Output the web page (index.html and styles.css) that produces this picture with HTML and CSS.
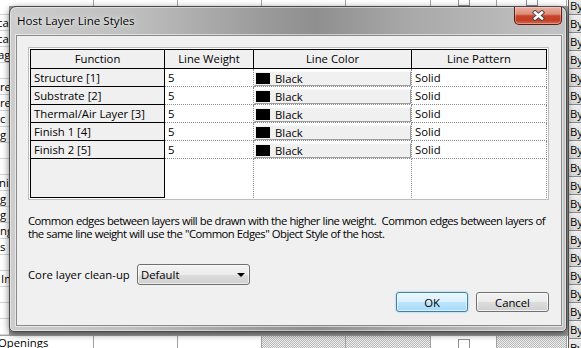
FILE: index.html
```html
<!DOCTYPE html>
<html lang="en">
<head>
    <meta charset="UTF-8">
    <meta name="viewport" content="width=device-width, initial-scale=1.0">
    <title>Host Layer Line Styles</title>
    <link rel="stylesheet" href="styles.css">
</head>
<body>
    <!-- the type properties sheet behind the dialog -->
    <div class="app">
        <div class="sheet">
            <div class="band band-top">
                <div class="cell c1"></div>
                <div class="cell c2"></div>
                <div class="cell c3"></div>
                <div class="cell c4"></div>
                <div class="cell c5"></div>
                <div class="cell c6 has-box"><span class="checkbox"></span></div>
                <div class="cell c7 has-box"><span class="checkbox"></span></div>
            </div>
            <div class="sheet-mid">
                <div class="left-col">
                    <div class="lrow lrow-first"></div>
                    <div class="lrow"><span class="cut3">cal</span></div>
                    <div class="lrow"><span class="cut3">cal</span></div>
                    <div class="lrow"><span class="cut2">ag</span></div>
                    <div class="lrow"></div>
                    <div class="lrow"><span>re</span></div>
                    <div class="lrow"><span>re</span></div>
                    <div class="lrow"><span>c l</span></div>
                    <div class="lrow"><span>g l</span></div>
                    <div class="lrow"></div>
                    <div class="lrow"></div>
                    <div class="lrow"><span class="cut1">ni</span></div>
                    <div class="lrow"><span>g</span></div>
                    <div class="lrow"><span>g</span></div>
                    <div class="lrow"><span>ng</span></div>
                    <div class="lrow"><span>s</span></div>
                    <div class="lrow"></div>
                    <div class="lrow"><span class="pad1">Im</span></div>
                    <div class="lrow"></div>
                    <div class="lrow"></div>
                    <div class="lrow"></div>
                </div>
            </div>
            <div class="band band-bottom">
                <div class="cell c1"><span class="cut2">Openings</span></div>
                <div class="cell c2"></div>
                <div class="cell c3"></div>
                <div class="cell c4 hatch"></div>
                <div class="cell c5 hatch"></div>
                <div class="cell c6 has-box-low"><span class="checkbox"></span></div>
                <div class="cell c7 hatch"></div>
            </div>
        </div>
        <div class="by-col">
            <div class="by">By</div>
            <div class="by">By</div>
            <div class="by">By</div>
            <div class="by">By</div>
            <div class="by">By</div>
            <div class="by">By</div>
            <div class="by">By</div>
            <div class="by">By</div>
            <div class="by">By</div>
            <div class="by">By</div>
            <div class="by">By</div>
            <div class="by">By</div>
            <div class="by">By</div>
            <div class="by">By</div>
            <div class="by">By</div>
            <div class="by">By</div>
            <div class="by">By</div>
            <div class="by">By</div>
            <div class="by">By</div>
            <div class="by">By</div>
        </div>
    </div>

    <div class="dialog">
        <div class="titlebar">
            <span class="title">Host Layer Line Styles</span>
            <div class="close">
                <svg width="13" height="11" viewBox="0 0 13 11">
                    <path d="M3 2.5 L10 8.5 M10 2.5 L3 8.5" stroke="#4a4a4a" stroke-width="4.4" stroke-linecap="square" fill="none"/>
                    <path d="M3 2.5 L10 8.5 M10 2.5 L3 8.5" stroke="#fff" stroke-width="2.4" stroke-linecap="square" fill="none"/>
                </svg>
            </div>
        </div>
        <div class="client">
            <div class="grid-wrap">
                <div class="grid">
                    <div class="hd">Function</div>
                    <div class="hd">Line Weight</div>
                    <div class="hd">Line Color</div>
                    <div class="hd">Line Pattern</div>

                    <div class="fn">Structure [1]</div>
                    <div class="val">5</div>
                    <div class="val color"><div class="color-btn"><span class="swatch"></span>Black</div></div>
                    <div class="val">Solid</div>

                    <div class="fn">Substrate [2]</div>
                    <div class="val">5</div>
                    <div class="val color"><div class="color-btn"><span class="swatch"></span>Black</div></div>
                    <div class="val">Solid</div>

                    <div class="fn">Thermal/Air Layer [3]</div>
                    <div class="val">5</div>
                    <div class="val color"><div class="color-btn"><span class="swatch"></span>Black</div></div>
                    <div class="val">Solid</div>

                    <div class="fn">Finish 1 [4]</div>
                    <div class="val">5</div>
                    <div class="val color"><div class="color-btn"><span class="swatch"></span>Black</div></div>
                    <div class="val">Solid</div>

                    <div class="fn">Finish 2 [5]</div>
                    <div class="val">5</div>
                    <div class="val color"><div class="color-btn"><span class="swatch"></span>Black</div></div>
                    <div class="val">Solid</div>

                    <div class="fn empty"></div>
                    <div class="val empty"></div>
                    <div class="val empty"></div>
                    <div class="val empty"></div>
                </div>
            </div>

            <div class="note">
                <div class="note-line">Common edges between layers will be drawn with the higher line weight.&nbsp; Common edges between layers of</div>
                <div class="note-line">the same line weight will use the "Common Edges" Object Style of the host.</div>
            </div>

            <div class="core">
                <label class="core-label">Core layer clean-up</label>
                <div class="combo">
                    <span>Default</span>
                    <span class="arrow"></span>
                </div>
            </div>

            <div class="actions">
                <button class="btn btn-default">OK</button>
                <button class="btn">Cancel</button>
            </div>
        </div>
    </div>
</body>
</html>
```

FILE: styles.css
```css
body {
    margin: 0;
    width: 581px;
    height: 348px;
    overflow: hidden;
    position: relative;
    font-family: "Open Sans", "Liberation Sans", sans-serif;
    font-size: 11.3px;
    color: #000;
    background: #fff;
}

/* sheet behind the dialog */
.app {
    display: flex;
    height: 348px;
}
.sheet {
    width: 569px;
    display: flex;
    flex-direction: column;
    background: #9c9c9c;
}
.band {
    display: flex;
    background: #fff;
}
.band .cell {
    box-sizing: border-box;
    border-right: 1px solid #a3a3a3;
    white-space: nowrap;
    overflow: hidden;
}
.c1 { width: 94px; }
.c2 { width: 84px; }
.c3 { width: 84px; }
.c4 { width: 84px; }
.c5 { width: 85px; }
.c6 { width: 66px; }
.c7 { width: 70px; }
.band-top {
    height: 6px;
}
.has-box {
    display: flex;
    justify-content: center;
    align-items: flex-end;
}
.has-box-low {
    display: flex;
    justify-content: center;
    padding-top: 3px;
}
.checkbox {
    flex: none;
    width: 10px;
    height: 10px;
    border: 1px solid #8f8f8f;
    background: #fff;
}
.band-bottom {
    height: 13px;
    box-sizing: border-box;
    border-top: 1px solid #a3a3a3;
    line-height: 14px;
}
.hatch {
    background: repeating-conic-gradient(#b9b9b9 0 25%, #efefef 0 50%) 0 0 / 2px 2px;
}
.sheet-mid {
    flex: 1;
    display: flex;
}
.left-col {
    width: 9px;
    overflow: hidden;
    background: #fff;
}
.lrow {
    height: 16px;
    box-sizing: border-box;
    border-bottom: 1px solid #d4d4d4;
    line-height: 15px;
    white-space: nowrap;
}
.lrow-first {
    height: 9px;
}
.cut1 { margin-left: -1px; }
.cut2 { margin-left: -2px; }
.cut3 { margin-left: -3px; }
.pad1 { margin-left: 1px; }
.lrow span, .band span {
    display: inline-block;
}
.by-col {
    width: 12px;
    border-left: 1px solid #5e5e5e;
    background: #d0d0d0;
    overflow: hidden;
}
.by {
    height: 18px;
    box-sizing: border-box;
    border-bottom: 1px solid #8a8a8a;
    background: linear-gradient(#efefef, #d6d6d6);
    line-height: 17px;
    padding-left: 1px;
    white-space: nowrap;
}
.by:first-child {
    margin-top: -3px;
}

/* dialog */
.dialog {
    position: absolute;
    left: 9px;
    top: 6px;
    width: 558px;
    height: 326px;
    box-sizing: border-box;
    border: 1px solid #4a4a4a;
    border-radius: 7px 7px 5px 5px;
    padding: 0 4px 5px 6px;
    display: flex;
    flex-direction: column;
    background: linear-gradient(90deg, #cdcdcd 0%, #bfbfbf 22%, #979797 48%, #8f8f8f 55%, #a9a9a9 72%, #c3c3c3 100%);
    box-shadow: inset 0 0 0 1px rgba(255, 255, 255, 0.45), 0 2px 7px rgba(0, 0, 0, 0.55);
}
.titlebar {
    height: 28px;
    display: flex;
    justify-content: space-between;
    align-items: flex-start;
}
.title {
    margin: 6px 0 0 1px;
    line-height: 16px;
    font-size: 11.6px;
    text-shadow: 0 0 6px rgba(255, 255, 255, 0.9), 0 0 2px rgba(255, 255, 255, 0.7);
}
.close {
    width: 48px;
    height: 18px;
    box-sizing: border-box;
    border: 1px solid #5e1b10;
    border-top: none;
    border-radius: 0 0 5px 5px;
    background: linear-gradient(#eab0a2 0%, #dd8c79 42%, #c8462d 52%, #c23d24 78%, #d6705a 100%);
    box-shadow: inset 0 0 0 1px rgba(255, 255, 255, 0.3);
    display: flex;
    align-items: center;
    justify-content: center;
}
.close svg {
    display: block;
}
.client {
    flex: 1;
    background: #f0f0f0;
    border: 1px solid #8a8a8a;
    box-shadow: 0 0 0 1px rgba(255, 255, 255, 0.55);
    padding: 11px 12px 0 11px;
    display: flex;
    flex-direction: column;
}

/* line styles table */
.grid-wrap {
    border: 1px solid #bdbdbd;
    padding: 1px;
    background: #fff;
}
.grid {
    display: grid;
    grid-template-columns: 134px 89px 158px 135px;
    border-top: 1px solid #000;
    border-left: 1px solid #000;
}
.hd {
    height: 19px;
    box-sizing: border-box;
    border-right: 1px solid #000;
    border-bottom: 1px solid #000;
    background: #f0f0f0;
    text-align: center;
    line-height: 18px;
}
.fn {
    height: 18px;
    box-sizing: border-box;
    border-right: 1px solid #000;
    border-bottom: 1px solid #000;
    background: #f0f0f0;
    padding-left: 3px;
    line-height: 17px;
    white-space: nowrap;
}
.val {
    height: 18px;
    box-sizing: border-box;
    border-right: 1px dotted #8c8c8c;
    border-bottom: 1px dotted #8c8c8c;
    background: #fff;
    padding-left: 3px;
    line-height: 17px;
}
.fn.empty, .val.empty {
    height: 39px;
}
.val.empty {
    border-bottom: none;
}
.val.color {
    padding: 2px 0 0 0;
}
.color-btn {
    height: 15px;
    box-sizing: border-box;
    border: 1px solid;
    border-color: #fbfbfb #9d9d9d #9d9d9d #fbfbfb;
    background: #f0f0f0;
    display: flex;
    align-items: center;
    line-height: 13px;
}
.swatch {
    width: 14px;
    height: 11px;
    margin: 0 5px 0 1px;
    background: #000;
}

.note {
    margin-top: 14px;
    letter-spacing: -0.55px;
    word-spacing: 0.3px;
    white-space: nowrap;
}
.note-line {
    height: 13px;
    line-height: 13px;
}
.core {
    display: flex;
    align-items: center;
    height: 21px;
    margin-top: 24px;
}
.core-label {
    width: 109px;
}
.combo {
    width: 113px;
    height: 21px;
    box-sizing: border-box;
    border: 1px solid #707070;
    border-radius: 3px;
    padding: 0 3px;
    display: flex;
    align-items: center;
    justify-content: space-between;
    background: linear-gradient(#f3f3f3 0%, #ececec 50%, #dddddd 51%, #d0d0d0 100%);
    box-shadow: inset 0 0 0 1px rgba(255, 255, 255, 0.6);
}
.arrow {
    width: 0;
    height: 0;
    margin-right: 1px;
    border-left: 4px solid transparent;
    border-right: 4px solid transparent;
    border-top: 4px solid #000;
}

.actions {
    display: flex;
    justify-content: flex-end;
    gap: 8px;
    margin-top: 7px;
}
.btn {
    width: 73px;
    height: 20px;
    box-sizing: border-box;
    padding: 0;
    font: inherit;
    color: #000;
    border: 1px solid #707070;
    border-radius: 3px;
    background: linear-gradient(#f2f2f2 0%, #ebebeb 50%, #dddddd 51%, #cfcfcf 100%);
    box-shadow: inset 0 0 0 1px rgba(255, 255, 255, 0.7);
}
.btn-default {
    width: 72px;
    border-color: #3c7fb1;
    background: linear-gradient(#eaf6fd 0%, #d9f0fc 50%, #bee6fd 51%, #a7d9f5 100%);
    box-shadow: inset 0 0 0 1px rgba(255, 255, 255, 0.6), 0 0 2px #6cc4f0;
}
```
